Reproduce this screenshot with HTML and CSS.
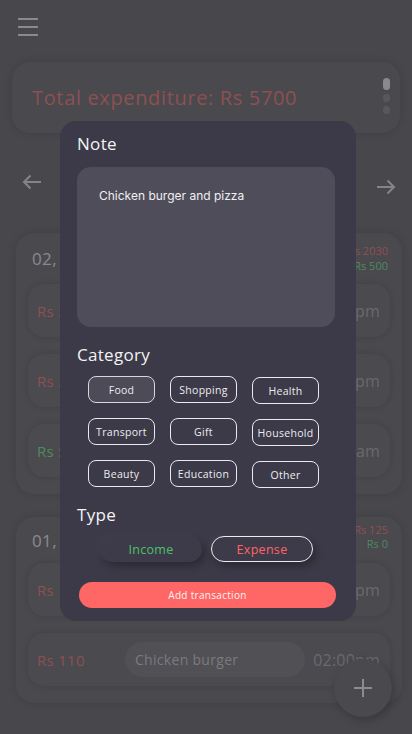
FILE: index.html
```html
<!DOCTYPE html>
<html>
<head>
<meta charset="utf-8">
<link rel="stylesheet" href="styles.css">
</head>
<body>
<div class="screen">
  <div class="topbar">
    <svg class="menu" width="22" height="20" viewBox="0 0 22 20"><path d="M1 2h20M1 10h20M1 18h20" stroke="#8a898e" stroke-width="2"/></svg>
  </div>
  <div class="total-card">
    <span class="total-text">Total expenditure: Rs 5700</span>
    <div class="dots"><span class="dot long"></span><span class="dot"></span><span class="dot"></span></div>
  </div>
  <div class="nav">
    <svg width="20" height="16" viewBox="0 0 20 16"><path d="M19 8H2M8.5 1.5L2 8l6.5 6.5" stroke="#858489" stroke-width="2" fill="none"/></svg>
    <svg class="next" width="20" height="16" viewBox="0 0 20 16"><path d="M1 8h17M11.5 1.5L18 8l-6.5 6.5" stroke="#858489" stroke-width="2" fill="none"/></svg>
  </div>
  <div class="day day1">
    <div class="day-head">
      <span class="date">02, Sep</span>
      <div class="sums"><span class="red">Rs 2030</span><span class="green">Rs 500</span></div>
    </div>
    <div class="row"><span class="amt red">Rs 300</span><span class="note">Pizza</span><span class="time">08:00pm</span></div>
    <div class="row"><span class="amt red">Rs 250</span><span class="note">Clothes</span><span class="time">04:00pm</span></div>
    <div class="row"><span class="amt green">Rs 500</span><span class="note">Salary</span><span class="time">10:00am</span></div>
  </div>
  <div class="day day2">
    <div class="day-head">
      <span class="date">01, Sep</span>
      <div class="sums"><span class="red">Rs 125</span><span class="green">Rs 0</span></div>
    </div>
    <div class="row"><span class="amt red">Rs 15</span><span class="note">Tea</span><span class="time">05:00pm</span></div>
    <div class="row"><span class="amt red">Rs 110</span><span class="note pill">Chicken burger</span><span class="time">02:00pm</span></div>
  </div>
  <div class="fab"><svg width="20" height="20" viewBox="0 0 20 20"><path d="M10 1v18M1 10h18" stroke="#8c8b90" stroke-width="2"/></svg></div>

  <div class="modal">
    <div class="label">Note</div>
    <div class="textarea">Chicken burger and pizza</div>
    <div class="label cat-label">Category</div>
    <div class="chips">
      <span class="chip selected">Food</span>
      <span class="chip">Shopping</span>
      <span class="chip down">Health</span>
      <span class="chip">Transport</span>
      <span class="chip">Gift</span>
      <span class="chip down">Household</span>
      <span class="chip">Beauty</span>
      <span class="chip">Education</span>
      <span class="chip down">Other</span>
    </div>
    <div class="label type-label">Type</div>
    <div class="types">
      <span class="type income">Income</span>
      <span class="type expense">Expense</span>
    </div>
    <div class="add">Add transaction</div>
  </div>
</div>
</body>
</html>
```

FILE: styles.css
```css
* { box-sizing: border-box; }
html, body { margin: 0; padding: 0; }
body {
  width: 412px;
  height: 734px;
  overflow: hidden;
  background: #48474c;
  font-family: "Open Sans", "Noto Sans", sans-serif;
}
.screen {
  position: relative;
  width: 412px;
  height: 734px;
  padding: 0 10px 0 16px;
}
.topbar { height: 62px; padding-top: 17px; padding-left: 1px; }
.menu { display: block; }
.total-card {
  margin-left: -4px;
  width: 388px;
  height: 71px;
  border-radius: 18px;
  background: #4a494e;
  box-shadow: 0 0 8px rgba(0,0,0,0.12);
  display: flex;
  align-items: center;
  justify-content: space-between;
  padding: 0 10px 0 20px;
}
.total-text { color: #8e5052; font-size: 20px; letter-spacing: 0.65px; }
.dots { display: flex; flex-direction: column; align-items: center; gap: 4px; margin-top: -4px; }
.dot { width: 7px; height: 8px; border-radius: 4px; background: #58575c; }
.dot.long { height: 12px; background: #8a898e; }
.nav {
  height: 100px;
  display: flex;
  justify-content: space-between;
  align-items: flex-start;
  padding: 41px 6px 0 6px;
}
.nav .next { margin-top: 5px; }
.day {
  width: 386px;
  border-radius: 18px;
  background: #4a494e;
  box-shadow: 0 0 8px rgba(0,0,0,0.12);
  padding: 0 12px 17px 12px;
  display: flex;
  flex-direction: column;
  gap: 17px;
}
.day2 { margin-top: 23px; }
.day-head {
  display: flex;
  justify-content: space-between;
  align-items: center;
  padding: 0 2px 0 4px;
}
.day1 .day-head { height: 34px; }
.day2 .day-head { height: 29px; }
.date { color: #8b8a8f; font-size: 17px; letter-spacing: 0.4px; margin-top: 16px; }
.day2 .date { margin-top: 17px; }
.sums { display: flex; flex-direction: column; align-items: flex-end; font-size: 11px; line-height: 15px; margin-top: 16px; }
.day2 .sums { margin-top: 10px; line-height: 14px; }
.red { color: #8e5052; }
.green { color: #4f8a5e; }
.row {
  height: 53px;
  border-radius: 16px;
  background: #4b4a4f;
  box-shadow: 0 0 6px rgba(0,0,0,0.13);
  display: flex;
  align-items: center;
  padding: 0 10px 0 9px;
}
.amt { flex: 0 0 88px; font-size: 15px; letter-spacing: 0.3px; }
.note { flex: 1; color: #7b7a7f; font-size: 14px; padding-left: 10px; letter-spacing: 0.3px; }
.note.pill { flex: 0 0 180px; height: 35px; border-radius: 18px; background: #505055; display: flex; align-items: center; }
.time { margin-left: auto; color: #6a696e; font-size: 16px; letter-spacing: 0.2px; white-space: nowrap; }
.fab {
  position: absolute;
  left: 334px;
  top: 659px;
  width: 58px;
  height: 58px;
  border-radius: 50%;
  background: #4a494e;
  box-shadow: 2px 3px 8px rgba(0,0,0,0.22);
  display: flex;
  align-items: center;
  justify-content: center;
}

.modal {
  position: absolute;
  left: 60px;
  top: 121px;
  width: 296px;
  height: 500px;
  border-radius: 16px;
  background: #3c3a48;
  padding: 12px 21px 0 17px;
  color: #f3f3f5;
}
.label { font-size: 17px; line-height: 22px; letter-spacing: 0.3px; }
.textarea {
  margin-top: 12px;
  height: 160px;
  border-radius: 14px;
  background: #4f4d5a;
  padding: 21px 22px;
  font-family: Inter, "Open Sans", sans-serif;
  font-size: 12px;
  color: #efeff2;
}
.cat-label { margin-top: 17px; }
.chips {
  margin-top: 10px;
  padding-left: 11px;
  display: grid;
  grid-template-columns: repeat(3, 67px);
  column-gap: 15px;
  row-gap: 15px;
}
.chip {
  height: 27px;
  border: 1px solid #e9e9ee;
  border-radius: 8px;
  display: flex;
  align-items: center;
  justify-content: center;
  font-size: 10.5px;
  letter-spacing: 0.3px;
  color: #ececf0;
}
.chip.selected { background: #4d4b58; border-color: #d7d7dc; }
.chip.down { transform: translateY(1px); }
.type-label { margin-top: 17px; }
.types {
  margin-top: 10px;
  display: flex;
  gap: 9px;
  padding-left: 23px;
}
.type {
  width: 102px;
  height: 26px;
  border-radius: 13px;
  display: flex;
  align-items: center;
  justify-content: center;
  font-size: 12.5px;
  letter-spacing: 0.3px;
  background: #3d3b49;
  box-shadow: 3px 4px 8px rgba(0,0,0,0.3), -2px -2px 6px rgba(255,255,255,0.04);
}
.income { color: #4cc269; }
.expense { color: #ff6464; border: 1px solid #ececf0; }
.add {
  margin-top: 20px;
  margin-left: 2px;
  width: 257px;
  height: 26px;
  border-radius: 13px;
  background: #ff6666;
  display: flex;
  align-items: center;
  justify-content: center;
  font-size: 10px;
  letter-spacing: 0.3px;
  color: #fff4f4;
}
```
